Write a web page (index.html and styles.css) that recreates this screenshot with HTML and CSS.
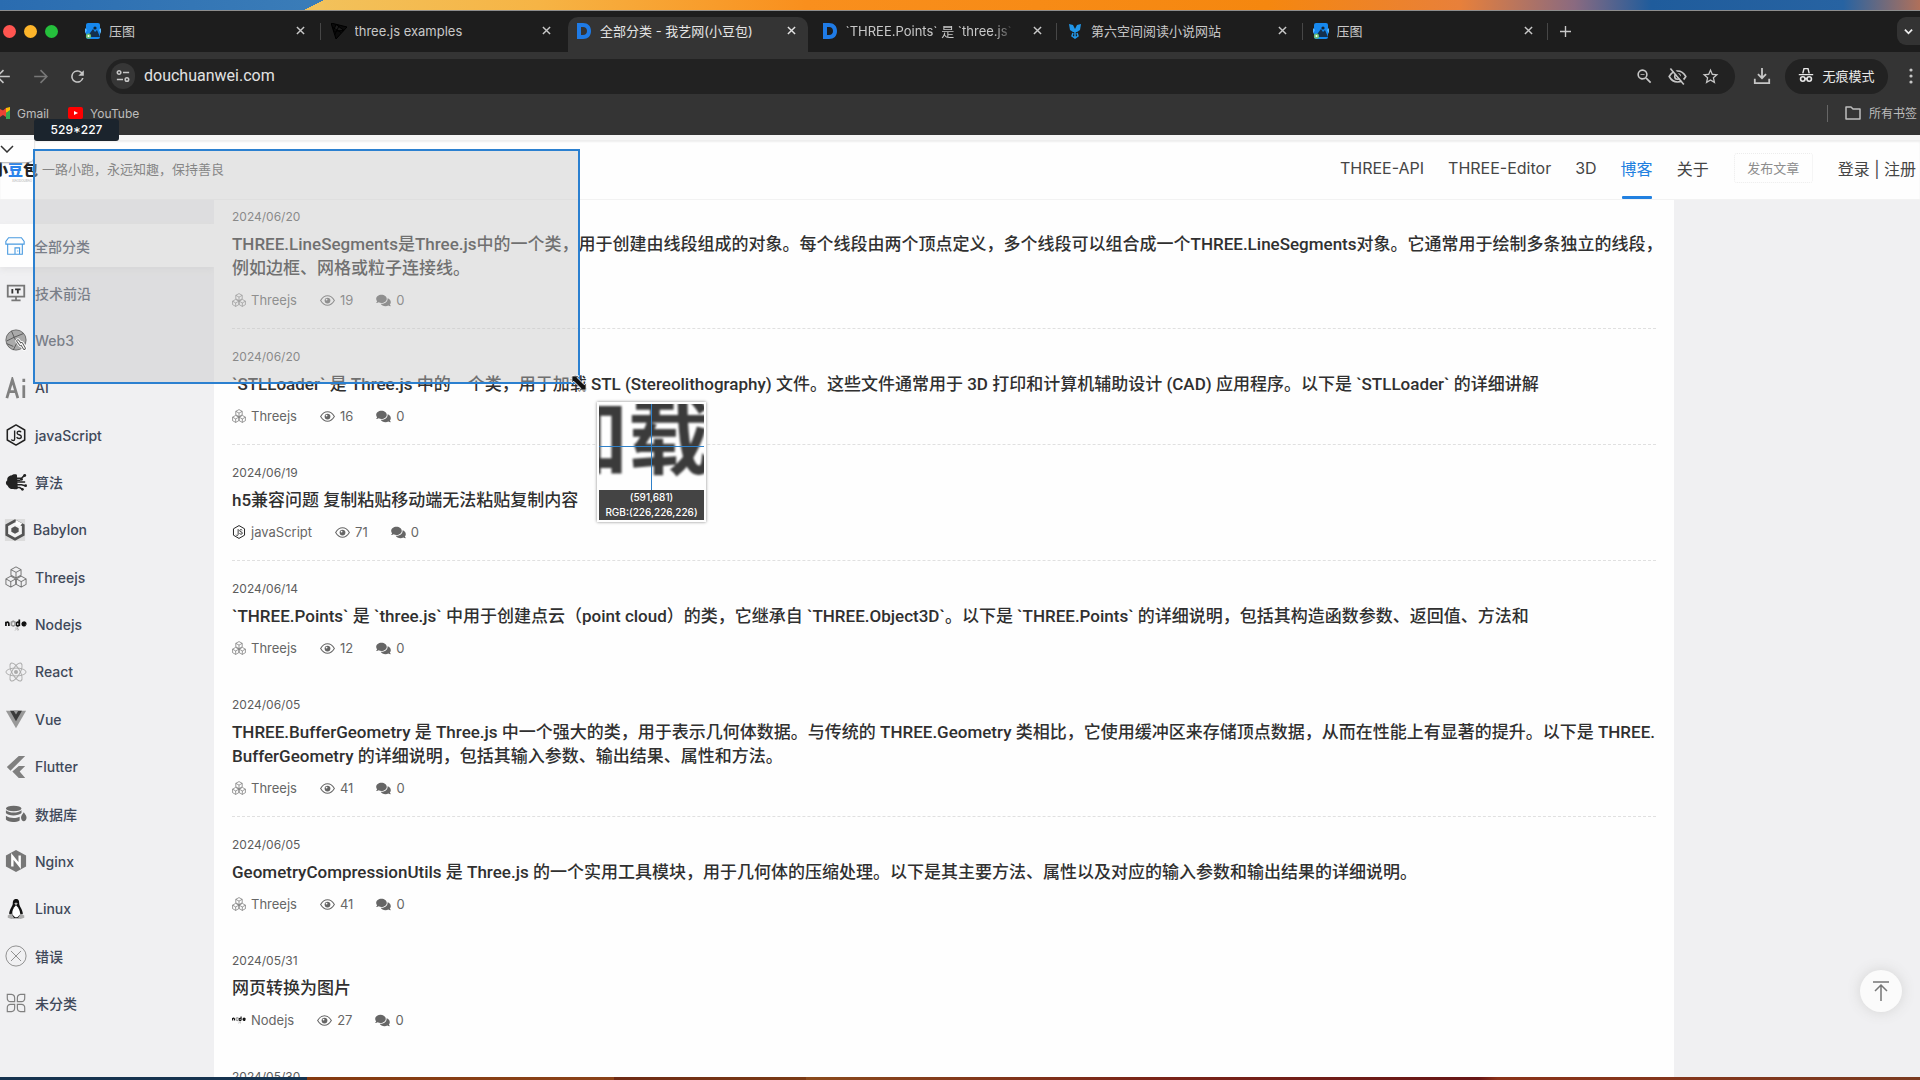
FILE: index.html
```html
<!DOCTYPE html>
<html lang="zh-CN">
<head>
<meta charset="utf-8">
<title>全部分类 - 我艺网(小豆包)</title>
<link rel="stylesheet" href="styles.css">
</head>
<body>
<svg class="defs" aria-hidden="true">
  <symbol id="close" viewBox="0 0 10 10"><path d="M1 1l8 8M9 1L1 9" fill="none" stroke="currentColor" stroke-width="1.6"/></symbol>
  <symbol id="pic" viewBox="0 0 16 16"><rect x="1" y="0" width="14" height="16" rx="2" fill="#1688ee"/><path d="M2 14l6-8 2 3 2-2 3 7z" fill="#14304f"/><circle cx="10" cy="5" r="1.6" fill="#123" /><path d="M0 5l2 2-2 4zM16 5l-2 2 2 4z" fill="#58b7ff"/><circle cx="3.500" cy="13" r="2.600" fill="#6cc070"/><circle cx="3.500" cy="13" r="1" fill="#fff"/></symbol>
  <symbol id="dmark" viewBox="0 0 16 16"><path fill-rule="evenodd" d="M1 0h6c5 0 8 3 8 8s-3 8-8 8H1zM5 4v8h2c2.500 0 4-1.500 4-4s-1.500-4-4-4z" fill="#1f7be6"/></symbol>
  <symbol id="cubes" viewBox="0 0 24 24"><g fill="none" stroke="currentColor" stroke-width="1.100" stroke-linejoin="round"><path d="M12 1l5.500 3v6L12 13l-5.500-3V4zM6.500 4l5.500 3 5.500-3M12 7v6M6.300 11l5.300 3v6l-5.300 3-5.300-3v-6zM1 14l5.300 3 5.300-3M6.300 17v6M17.700 11l5.300 3v6l-5.300 3-5.300-3v-6zM12.400 14l5.300 3 5.300-3M17.700 17v6"/></g></symbol>
  <symbol id="eye" viewBox="0 0 24 18"><path d="M1 9c3-5 7-7.500 11-7.500S20 4 23 9c-3 5-7 7.500-11 7.500S4 14 1 9z" fill="none" stroke="currentColor" stroke-width="1.700"/><circle cx="12" cy="9" r="4.600" fill="currentColor"/><circle cx="10.500" cy="7.500" r="1.400" fill="#fff"/></symbol>
  <symbol id="chat" viewBox="0 0 576 512"><path fill="currentColor" d="M416 192c0-88.400-93.100-160-208-160S0 103.600 0 192c0 34.300 14.100 65.900 38 92-13.400 30.200-35.500 54.200-35.800 54.500-2.200 2.300-2.800 5.700-1.500 8.700S4.800 352 8 352c36.600 0 66.900-12.300 88.700-25 32.200 15.700 70.300 25 111.300 25 114.900 0 208-71.600 208-160zm122 220c23.900-26 38-57.700 38-92 0-66.900-53.500-124.200-129.300-148.100.900 6.600 1.300 13.300 1.300 20.100 0 105.900-107.700 192-240 192-10.800 0-21.300-.800-31.700-1.900C207.800 439.600 281.800 480 368 480c41 0 79.100-9.200 111.300-25 21.800 12.700 52.100 25 88.700 25 3.200 0 6.100-1.900 7.300-4.800 1.300-2.900.700-6.300-1.500-8.700-.300-.300-22.400-24.200-35.800-54.500z"/></symbol>
  <symbol id="jshex" viewBox="0 0 24 24"><path d="M12 1l9.500 5.500v11L12 23l-9.500-5.500v-11z" fill="none" stroke="#222" stroke-width="1.700" stroke-linejoin="round"/><path d="M10.500 7v9.500c0 2-3 1.800-3.500.3M17.500 9c-.8-1.500-4.300-1.500-4.300.7 0 2.800 4.600 1.300 4.600 4.200 0 2.500-4.300 2.500-5 .3" fill="none" stroke="#222" stroke-width="1.500"/></symbol>
  <symbol id="nodelogo" viewBox="0 0 24 14"><g fill="none" stroke-width="1.900"><path d="M1 8V3.500M1 5c.8-1.600 3.200-1.600 3.200.5V8M15.600 1v7M15.600 5.500a1.700 2 0 1 0 0 1M18.800 5.800h3.800c0-2.600-3.600-2.600-3.800 0 .2 2.200 2.600 2.300 3.700 1.300" stroke="#111"/><path d="M7 4l2-1 2 1v3L9 8 7 7z" stroke="#999"/><path d="M12 9.500v2.500l-1 1M14.500 10h-1v1.300h1v1.300h-1" stroke="#999" stroke-width=".8"/></g></symbol>
</svg>

<div class="desktop">
  <div class="window">
    <div class="tabbar">
      <div class="lights"><i class="red"></i><i class="amber"></i><i class="green"></i></div>
      <div class="tabs">
        <div class="tab"><svg class="fav"><use href="#pic"/></svg><span class="name">压图</span><button class="x" aria-label="关闭"><svg><use href="#close"/></svg></button></div>
        <div class="tab plain"><svg class="fav" viewBox="0 0 16 16"><path d="M0 0l16 4L5 16zM5 1.500L2.500 8 13 7.500 5 1.500M8 3L3.500 12M10 9.500L1 4" fill="#0b0b0b" stroke="#000"/></svg><span class="name">three.js examples</span><button class="x" aria-label="关闭"><svg><use href="#close"/></svg></button></div>
        <div class="tab active"><svg class="fav"><use href="#dmark"/></svg><span class="name">全部分类 - 我艺网(小豆包)</span><button class="x" aria-label="关闭"><svg><use href="#close"/></svg></button></div>
        <div class="tab"><svg class="fav"><use href="#dmark"/></svg><span class="name fade">`THREE.Points` 是 `three.js`</span><button class="x" aria-label="关闭"><svg><use href="#close"/></svg></button></div>
        <div class="tab"><svg class="fav" viewBox="0 0 16 16"><path d="M2 1l4 1 2 4 2-4 4-1-1 6-3 2H6L3 7z" fill="#2196e8"/><path d="M8 8v7M6 10l-1 3 3 2 3-2-1-3" fill="none" stroke="#2196e8" stroke-width="1.500"/></svg><span class="name">第六空间阅读小说网站</span><button class="x" aria-label="关闭"><svg><use href="#close"/></svg></button></div>
        <div class="tab"><svg class="fav"><use href="#pic"/></svg><span class="name">压图</span><button class="x" aria-label="关闭"><svg><use href="#close"/></svg></button></div>
      </div>
      <button class="plus" aria-label="新标签页"><svg viewBox="0 0 12 12"><path d="M6 0v12M0 6h12" stroke="currentColor" stroke-width="1.500"/></svg></button>
      <button class="more" aria-label="搜索标签页"><svg viewBox="0 0 10 10"><path d="M1 3l4 4 4-4" fill="none" stroke="currentColor" stroke-width="2"/></svg></button>
    </div>

    <div class="toolbar">
      <div class="history">
        <button aria-label="后退"><svg viewBox="0 0 24 24"><path d="M20 12H4M12 4l-8 8 8 8" fill="none" stroke="currentColor" stroke-width="2"/></svg></button>
        <button aria-label="前进" class="dim"><svg viewBox="0 0 24 24"><path d="M4 12h16M12 4l8 8-8 8" fill="none" stroke="currentColor" stroke-width="2"/></svg></button>
        <button aria-label="刷新"><svg viewBox="0 0 24 24"><path fill="currentColor" d="M17.650 6.350A8 8 0 1 0 19.730 14h-2.080A6 6 0 1 1 12 6c1.660 0 3.140.69 4.220 1.780L13 11h7V4z"/></svg></button>
      </div>
      <div class="omnibox">
        <button class="site" aria-label="网站信息"><svg viewBox="0 0 16 16"><g fill="none" stroke="currentColor" stroke-width="1.800"><circle cx="3.500" cy="4" r="2"/><path d="M8 4h7M1 12h7"/><circle cx="12.500" cy="12" r="2"/></g></svg></button>
        <input type="text" aria-label="地址栏" value="douchuanwei.com">
        <button aria-label="缩放"><svg viewBox="0 0 24 24"><path fill="currentColor" d="M15.500 14h-.79l-.28-.27A6.500 6.500 0 1 0 13.730 14.430l.27.28v.79l5 5 1.500-1.500zm-6 0a4.500 4.500 0 1 1 0-9 4.500 4.500 0 0 1 0 9zM7 9h5v1H7z"/></svg></button>
        <button aria-label="第三方 Cookie"><svg viewBox="0 0 24 24"><path d="M1.500 12C4 7.500 8 5 12 5s8 2.500 10.500 7c-2.500 4.500-6.500 7-10.500 7S4 16.500 1.500 12z" fill="none" stroke="currentColor" stroke-width="2"/><circle cx="12" cy="12" r="3.500" fill="none" stroke="currentColor" stroke-width="2"/><path d="M5 1l17 20" stroke="#222" stroke-width="3"/><path d="M3 2l17 20" stroke="currentColor" stroke-width="2"/></svg></button>
        <button aria-label="收藏"><svg viewBox="0 0 24 24"><path fill="currentColor" d="M22 9.240l-7.190-.62L12 2 9.190 8.630 2 9.240l5.460 4.730L5.820 21 12 17.270 18.180 21l-1.630-7.030zM12 15.400l-3.760 2.270 1-4.280-3.320-2.880 4.380-.38L12 6.100l1.710 4.040 4.380.38-3.320 2.880 1 4.280z"/></svg></button>
      </div>
      <button class="dl" aria-label="下载"><svg viewBox="0 0 20 20"><path d="M10 1v11M5.500 8l4.500 4.500L14.500 8M2 13v5h16v-5" fill="none" stroke="currentColor" stroke-width="2"/></svg></button>
      <button class="incog"><svg viewBox="0 0 20 20"><path d="M6 8l1.500-6h5L14 8M1 9.500h18" fill="none" stroke="currentColor" stroke-width="1.800"/><g fill="none" stroke="currentColor" stroke-width="2"><circle cx="6" cy="15" r="2.800"/><circle cx="14" cy="15" r="2.800"/><path d="M8.500 14.500h3"/></g></svg>无痕模式</button>
      <button class="dots" aria-label="菜单"><svg viewBox="0 0 4 16"><g fill="currentColor"><circle cx="2" cy="2" r="1.600"/><circle cx="2" cy="8" r="1.600"/><circle cx="2" cy="14" r="1.600"/></g></svg></button>
    </div>

    <div class="bookmarks">
      <a href="#" class="gmail"><svg viewBox="0 0 10 12"><path d="M0 2v4l6 4V5z" fill="#ea4335"/><path d="M0 6l6-5v5l-6 4z" fill="#ea4335"/><path d="M6 1l4-1v4L6 6z" fill="#fbbc04"/><path d="M6 6l4-3v9H6z" fill="#34a853"/></svg>Gmail</a>
      <a href="#" class="yt"><svg viewBox="0 0 15 12"><rect width="15" height="12" rx="2" fill="#f00"/><path d="M6 4l4 2-4 2z" fill="#fff"/></svg>YouTube</a>
      <a href="#" class="all"><svg viewBox="0 0 16 14"><path d="M1 1h5l2 2h7v10H1z" fill="none" stroke="currentColor" stroke-width="1.500" stroke-linejoin="round"/></svg>所有书签</a>
    </div>

    <div class="page">
      <header class="head">
        <a href="#" class="logo"><span class="brush">小<b>豆</b>包</span><small>XIAODOUBAO</small></a>
        <p class="slogan">一路小跑，永远知趣，保持善良</p>
        <nav class="nav">
          <a href="#">THREE-API</a><a href="#">THREE-Editor</a><a href="#">3D</a><a href="#" class="on">博客</a><a href="#">关于</a>
        </nav>
        <button class="post">发布文章</button>
        <div class="login"><a href="#">登录</a> | <a href="#">注册</a></div>
      </header>

      <div class="body">
        <aside class="side">
          <ul>
            <li class="on"><a href="#"><svg viewBox="0 0 24 24"><g fill="none" stroke="#4a9be0" stroke-width="1.200"><path d="M5 3h14l3 4v3H2V7zM4 10v11h16V10M12 21v-7h5v7M15 17v1"/></g></svg>全部分类</a></li>
            <li><a href="#"><svg viewBox="0 0 24 24"><path d="M3 4h18v12H3z" fill="none" stroke="#777" stroke-width="2"/><path d="M8 7.500v5M11 8h6M14 8v4.500" stroke="#333" stroke-width="2"/><path d="M12 16v3M7 20h10" stroke="#777" stroke-width="2"/></svg>技术前沿</a></li>
            <li><a href="#"><svg viewBox="0 0 24 24"><circle cx="12" cy="12" r="11" fill="#aaa" stroke="#666"/><path d="M7 2l3 7-8 4M10 9l10-4M10 9l3 6-4 8M2 16l7 3" fill="none" stroke="#555"/><g fill="none" stroke-linecap="round"><path d="M14 13l3 4M18 16l3 5" stroke="#fff" stroke-width="5.500"/><path d="M14 13l3 4M18 16l3 5" stroke="#555" stroke-width="3.500"/><path d="M14 13l3 4M18 16l3 5" stroke="#fff" stroke-width="1.500"/></g></svg>Web3</a></li>
            <li><a href="#"><svg viewBox="0 0 24 24"><g fill="none" stroke="#808080" stroke-width="3"><path d="M2 23L8 3l6 20M4 16h8M20.500 9v14M20.500 2v3.500"/></g></svg>AI</a></li>
            <li><a href="#"><svg><use href="#jshex"/></svg>javaScript</a></li>
            <li><a href="#"><svg viewBox="0 0 24 24"><path d="M13 4c-3-1-5 0-6 1-3 0-5 3-4.500 5C0 12 1 15 3 16c1 3 4 4 6 3.500 2 1 4 .5 5-.5z" fill="#222"/><g fill="none" stroke="#222" stroke-width="1.700"><path d="M12 8h6l3-3M12 12h10M12 10h5M12 15h6l4 1M12 18h4l3 2"/></g><g fill="#222"><circle cx="21.500" cy="5" r="1.600"/><circle cx="18" cy="9" r="1.500"/><circle cx="22.500" cy="16" r="1.500"/><circle cx="19" cy="20" r="1.500"/></g></svg>算法</a></li>
            <li class="tight"><a href="#"><svg viewBox="0 0 24 24"><path d="M1 0h22v24H1z" fill="#dcdcdc"/><path d="M12 2l9 5v10l-9 5-9-5V7z" fill="#f4f4f4" stroke="#555" stroke-width="3"/><path d="M13 1l7 4-3 3-5-2z" fill="#fff"/><path d="M12 8l4 2v4l-4 2-4-2v-4z" fill="#555"/></svg>Babylon</a></li>
            <li><a href="#"><svg class="soft"><use href="#cubes"/></svg>Threejs</a></li>
            <li><a href="#"><svg><use href="#nodelogo"/></svg>Nodejs</a></li>
            <li><a href="#"><svg viewBox="0 0 24 24"><g fill="none" stroke="#aaa"><ellipse cx="12" cy="12" rx="11" ry="4.300"/><ellipse cx="12" cy="12" rx="11" ry="4.300" transform="rotate(60 12 12)"/><ellipse cx="12" cy="12" rx="11" ry="4.300" transform="rotate(120 12 12)"/></g><circle cx="12" cy="12" r="2.200" fill="#aaa"/></svg>React</a></li>
            <li><a href="#"><svg viewBox="0 0 24 24"><path d="M1 3h22L12 22z" fill="#999"/><path d="M5.500 3h13L12 14.500z" fill="#3a3a3a"/><path d="M9.500 3h5L12 7z" fill="#999"/></svg>Vue</a></li>
            <li><a href="#"><svg viewBox="0 0 24 24"><path d="M15 0h7L6 16l-4-4zM15 11h7l-6 6 6 7h-7l-7-7z" fill="#808080"/></svg>Flutter</a></li>
            <li><a href="#"><svg viewBox="0 0 24 24"><g fill="#6b6b6b"><ellipse cx="9.500" cy="6" rx="8.500" ry="3"/><path d="M1 8c4 3.300 13 3.300 17 0v3c-3 3.500-15 3.500-17 0zM1 14c4 3 11 3 15 1v4c-4 2.500-13 2.300-15-1z"/><path d="M20.500 10c2 3 3 4 3 6s-1.500 4-3 4-3-2-3-4 1-3 3-6z"/></g></svg>数据库</a></li>
            <li><a href="#"><svg viewBox="0 0 24 24"><path d="M12 0l11 6v12l-11 6-11-6V6z" fill="#777"/><path d="M8 18V7l8 10V6" fill="none" stroke="#fff" stroke-width="2.600"/></svg>Nginx</a></li>
            <li><a href="#"><svg viewBox="0 0 24 24"><path d="M12 1c-3 0-3.500 2.500-3.500 5S5 12 4.500 17l4 5h7l4-5c-.5-5-4-8-4-11S15 1 12 1z" fill="#111"/><path d="M12 8c-3 3-4.500 6-4 10l3 3h2.500l3-3c0-4-1.500-7-4.500-10z" fill="#fff"/><path d="M10 6l2-1 2 1-2 2z" fill="#bbb"/><path d="M3 19l4-2 3 5-3 1-4-1.500zM21 19l-4-2-3 5 3 1 4-1.500z" fill="#aaa"/></svg>Linux</a></li>
            <li><a href="#"><svg viewBox="0 0 24 24"><g fill="none" stroke="#888"><circle cx="12" cy="12" r="11"/><path d="M6.500 6.500l11 11M17.500 6.500l-11 11"/></g></svg>错误</a></li>
            <li><a href="#"><svg viewBox="0 0 24 24"><g fill="none" stroke="#808080" stroke-width="1.300"><path d="M2.500 2.500H7a4 4 0 0 1 3.500 4v4H6a3.500 3.500 0 0 1-3.500-4zM21.500 2.500H17a4 4 0 0 0-3.500 4v4H18a3.500 3.500 0 0 0 3.500-4zM2.500 21.500H7a4 4 0 0 0 3.500-4v-4H6a3.500 3.500 0 0 0-3.500 4zM21.500 21.500H17a4 4 0 0 1-3.500-4v-4H18a3.500 3.500 0 0 1 3.500 4z"/></g></svg>未分类</a></li>
          </ul>
        </aside>

        <main class="list">
          <article><time>2024/06/20</time><h2>THREE.LineSegments是Three.js中的一个类，用于创建由线段组成的对象。每个线段由两个顶点定义，多个线段可以组合成一个THREE.LineSegments对象。它通常用于绘制多条独立的线段，<br>例如边框、网格或粒子连接线。</h2><div class="meta"><span><svg class="cat"><use href="#cubes"/></svg>Threejs</span><span><svg class="see"><use href="#eye"/></svg>19</span><span><svg class="see"><use href="#chat"/></svg>0</span></div></article>
          <article><time>2024/06/20</time><h2>`STLLoader` 是 Three.js 中的一个类，用于加载 STL (Stereolithography) 文件。这些文件通常用于 3D 打印和计算机辅助设计 (CAD) 应用程序。以下是 `STLLoader` 的详细讲解</h2><div class="meta"><span><svg class="cat"><use href="#cubes"/></svg>Threejs</span><span><svg class="see"><use href="#eye"/></svg>16</span><span><svg class="see"><use href="#chat"/></svg>0</span></div></article>
          <article><time>2024/06/19</time><h2>h5兼容问题 复制粘贴移动端无法粘贴复制内容</h2><div class="meta"><span><svg class="cat"><use href="#jshex"/></svg>javaScript</span><span><svg class="see"><use href="#eye"/></svg>71</span><span><svg class="see"><use href="#chat"/></svg>0</span></div></article>
          <article class="bare"><time>2024/06/14</time><h2>`THREE.Points` 是 `three.js` 中用于创建点云（point cloud）的类，它继承自 `THREE.Object3D`。以下是 `THREE.Points` 的详细说明，包括其构造函数参数、返回值、方法和</h2><div class="meta"><span><svg class="cat"><use href="#cubes"/></svg>Threejs</span><span><svg class="see"><use href="#eye"/></svg>12</span><span><svg class="see"><use href="#chat"/></svg>0</span></div></article>
          <article><time>2024/06/05</time><h2>THREE.BufferGeometry 是 Three.js 中一个强大的类，用于表示几何体数据。与传统的 THREE.Geometry 类相比，它使用缓冲区来存储顶点数据，从而在性能上有显著的提升。以下是 THREE.<br>BufferGeometry 的详细说明，包括其输入参数、输出结果、属性和方法。</h2><div class="meta"><span><svg class="cat"><use href="#cubes"/></svg>Threejs</span><span><svg class="see"><use href="#eye"/></svg>41</span><span><svg class="see"><use href="#chat"/></svg>0</span></div></article>
          <article class="bare"><time>2024/06/05</time><h2>GeometryCompressionUtils 是 Three.js 的一个实用工具模块，用于几何体的压缩处理。以下是其主要方法、属性以及对应的输入参数和输出结果的详细说明。</h2><div class="meta"><span><svg class="cat"><use href="#cubes"/></svg>Threejs</span><span><svg class="see"><use href="#eye"/></svg>41</span><span><svg class="see"><use href="#chat"/></svg>0</span></div></article>
          <article class="bare"><time>2024/05/31</time><h2>网页转换为图片</h2><div class="meta"><span><svg class="cat"><use href="#nodelogo"/></svg>Nodejs</span><span><svg class="see"><use href="#eye"/></svg>27</span><span><svg class="see"><use href="#chat"/></svg>0</span></div></article>
          <article class="bare"><time>2024/05/30</time></article>
        </main>
      </div>
      <button class="top" aria-label="回到顶部"><svg viewBox="0 0 16 20"><path d="M0 1h16M8 4v16M2 10l6-6 6 6" fill="none" stroke="currentColor" stroke-width="1.500"/></svg></button>
    </div>
  </div>
</div>

<div class="corner"><svg viewBox="0 0 14 8"><path d="M1 1l6 6 6-6" fill="none" stroke="currentColor" stroke-width="1.500"/></svg></div>
<div class="selection"></div>
<div class="size">529*227</div>
<svg class="cursor" viewBox="0 0 18 18"><path d="M1 1h8L7 3l8 8 2-2v8H9l2-2-8-8-2 2z" fill="#111" stroke="#fff"/></svg>
<div class="loupe"><div class="lens"><span>加载</span></div><p>(591,681)<br>RGB:(226,226,226)</p></div>
</body>
</html>
```
FILE: styles.css
```css
* { box-sizing: border-box; margin: 0; padding: 0; }
body {
  height: 100vh;
  overflow: hidden;
  font-family: Inter, "Noto Sans CJK SC", sans-serif;
  color: #333;
}
a { color: inherit; text-decoration: none; }
button { border: 0; background: none; color: inherit; font: inherit; display: flex; align-items: center; justify-content: center; }
ul { list-style: none; }
svg { display: block; flex: none; }
.defs { position: absolute; width: 0; height: 0; }

.desktop {
  height: 100vh;
  padding: 10px 0 3px;
  background:
    linear-gradient(90deg, #16334f 0 16%, #84390f 16%, #8a4218 32%, #6e2a14 32%, #7a3a14 42%, #8a4a1c 42%, #7a2418 60%, #671616 77%, #8a3218 78%, #7a3a20 100%) bottom / 100% 3px no-repeat,
    linear-gradient(to bottom right, #3a7cb8 50%, #f2c25c 50%) 304px 0 / 20px 10px no-repeat,
    linear-gradient(90deg, #2a6cb0 0, #3a7cb8 16%, #f2c25c 16%, #f6b445 28%, #f98f1d 42%, #f5870f 66%, #e8803a 76%, #8a6a80 82%, #1f5c9c 86%, #2763a2 96%, #b0705a 100%);
}
.window { height: 100%; display: flex; flex-direction: column; overflow: hidden; border-top: 1px solid #8d8d8d; background: #fefefe; }

.tabbar { display: flex; flex: none; height: 41px; background: #1d1d1d; color: #c8c8c8; font-size: 13px; }
.lights { display: flex; align-items: center; gap: 8px; width: 75px; flex: none; padding-left: 3px; }
.lights i { width: 13px; height: 13px; border-radius: 50%; }
.red { background: #ff5550; }
.amber { background: #fdb52a; }
.green { background: #25c03c; }
.tabs { display: flex; width: 1473px; flex: 0 1 auto; }
.tab { display: flex; align-items: center; flex: 1 1 0; min-width: 0; gap: 8px; padding: 0 10px 2px; position: relative; }
.tab::after { content: ""; position: absolute; right: 0; top: 12px; width: 1px; height: 17px; background: #474747; }
.plain::after, .active::after { display: none; }
.active { background: #343434; border-radius: 10px 10px 0 0; margin: 6px 4px 0 2px; padding: 0 6px 8px 8px; color: #e4e4e4; }
.fav { width: 16px; height: 16px; }
.name { flex: 1; white-space: nowrap; overflow: hidden; }
.fade { -webkit-mask-image: linear-gradient(90deg, #000 85%, transparent 98%); mask-image: linear-gradient(90deg, #000 85%, transparent 98%); }
.x { width: 20px; height: 20px; }
.x svg { width: 9px; height: 9px; }
.plus { width: 34px; }
.plus svg { width: 11px; height: 11px; }
.more { margin: 6px 0 7px auto; width: 23px; background: #333; border-radius: 9px 0 0 9px; color: #eee; }
.more svg { width: 9px; height: 9px; }

.toolbar { display: flex; flex: none; align-items: center; height: 48px; background: #343434; color: #c6c6c6; }
.history { display: flex; width: 106px; gap: 18px; }
.history svg { width: 19px; height: 19px; }
.history button:first-child { margin-left: -6px; }
.dim { color: #777; }
.omnibox { flex: 1; display: flex; align-items: center; gap: 14px; height: 35px; background: #222; border-radius: 18px; padding: 0 15px 0 5px; }
.omnibox button { width: 19px; }
.omnibox svg { width: 19px; height: 19px; }
.omnibox .site { width: 24px; height: 26px; border-radius: 13px; background: #363636; margin-right: -5px; }
.omnibox .site svg { width: 14px; height: 14px; }
.omnibox input { flex: 1; min-width: 0; border: 0; outline: 0; background: none; color: #e2e2e2; font: 15px/20px Roboto, sans-serif; font-size: 16px; }
.dl { width: 50px; flex: none; padding-left: 4px; }
.dl svg { width: 18px; height: 18px; }
.incog { flex: none; gap: 8px; width: 103px; height: 35px; border-radius: 18px; background: #222; color: #e8e8e8; font-size: 13px; padding-bottom: 2px; }
.incog svg { width: 16px; height: 16px; }
.dots { width: 32px; padding-left: 13px; flex: none; }
.dots svg { width: 4px; height: 16px; }

.bookmarks { display: flex; flex: none; align-items: center; gap: 19px; height: 35px; padding-bottom: 9px; background: #343434; color: #bdbdbd; font-size: 12px; }
.bookmarks a { display: flex; align-items: center; gap: 7px; }
.gmail svg { width: 10px; height: 12px; }
.yt svg { width: 15px; height: 12px; }
.bookmarks .all { margin-left: auto; gap: 8px; border-left: 1px solid #666; padding: 0 3px 0 17px; line-height: 17px; }
.all svg { width: 16px; height: 14px; }

.page { flex: 1; min-height: 0; display: flex; flex-direction: column; position: relative; background: #fefefe; border-top: 5px solid #f6f6f6; box-shadow: inset 0 2px 2px #eee; }
.head { flex: none; display: flex; align-items: center; height: 60px; padding: 0 4px 4px 0; border-bottom: 1px solid #f2f2f2; font-size: 16px; color: #454545; }
.logo { width: 42px; flex: none; display: flex; flex-direction: column; align-items: flex-start; padding-top: 8px; }
.brush { font-size: 15px; line-height: 18px; font-weight: 900; color: #222; margin-left: -7px; white-space: nowrap; }
.brush b { color: #2b83ea; }
.logo small { font-size: 3px; line-height: 4px; color: #aaa; margin-left: 12px; }
.slogan { font-size: 13px; line-height: 20px; padding-top: 2px; color: #555; }
.nav { margin-left: auto; display: flex; gap: 24px; align-self: stretch; }
.nav a { display: flex; align-items: center; position: relative; }
.nav .on { color: #2180e0; }
.nav .on::after { content: ""; position: absolute; left: 1px; right: 1px; bottom: -4px; height: 3px; border-radius: 1px; background: #2180e0; }
.post { margin: 0 25px; width: 79px; height: 30px; border: 1px dotted #ececec; border-radius: 3px; font-size: 13px; color: #8d8d8d; }

.body { flex: 1; min-height: 0; display: grid; grid-template-columns: 214px minmax(0, 1fr) 246px; background: #f0f0f2; }
.side { display: flex; padding: 22px 0 50px; }
.side ul { flex: 1; display: flex; flex-direction: column; }
.side li { flex: 1; display: flex; padding: 2px 0; }
.side a { flex: 1; display: flex; align-items: center; gap: 8px; padding-left: 5px; font-size: 14px; font-weight: 500; color: #40495a; }
.side svg { width: 22px; height: 22px; }
.side .on a { background: #fefefe; padding-left: 4px; box-shadow: 0 3px 6px #e4e4e6; }
.side .tight a { padding-left: 4px; gap: 7px; }
.soft { color: #777; }

.list { background: #fefefe; padding: 0 18px; overflow: hidden; }
.list article { padding: 18px 0 18px; border-bottom: 1px dashed #e0e0e0; }
.list article:first-child { padding-top: 7px; }
.list .bare { border-color: transparent; }
.list time { display: block; font-size: 12px; line-height: 20px; color: #5c5c5c; }
.list h2 { margin: 5px 0 10px; font-family: Roboto, "Noto Sans CJK SC", sans-serif; font-size: 17px; line-height: 24px; font-weight: 500; color: #303030; white-space: nowrap; }
.meta { display: flex; gap: 23px; font-size: 13px; line-height: 20px; color: #666; }
.meta span { display: flex; align-items: center; gap: 5px; }
.cat { width: 14px; height: 14px; }
.see { width: 15px; height: 13px; }

.top { position: absolute; right: 18px; bottom: 65px; width: 42px; height: 42px; border-radius: 50%; background: #fbfbfb; color: #777; box-shadow: 0 0 14px #d4d4d4; }
.top svg { width: 16px; height: 20px; }

.corner { position: absolute; left: 0; top: 140px; width: 34px; height: 22px; padding: 5px 0 0; background: #fefefe; border-radius: 0 0 6px 0; box-shadow: 0 1px 2px #aaa; color: #333; }
.corner svg { width: 14px; height: 8px; }
.selection { position: absolute; left: 33px; top: 149px; width: 547px; height: 235px; border: 2px solid #2b80d0; background: rgba(198, 198, 198, 0.43); }
.size { position: absolute; left: 34px; top: 119px; width: 85px; height: 22px; border-radius: 3px; background: #1b242d; color: #fff; font-size: 12px; line-height: 22px; font-weight: 500; text-align: center; }
.cursor { position: absolute; left: 571px; top: 375px; width: 16px; height: 16px; }
.loupe { position: absolute; left: 597px; top: 402px; width: 109px; border: 2px solid #fefefe; background: #fefefe; box-shadow: 0 0 3px #888; }
.lens { position: relative; height: 86px; overflow: hidden; }
.lens span { position: absolute; left: -55px; top: -8px; font-size: 84px; line-height: 84px; font-weight: 700; white-space: nowrap; color: #3b3b3b; filter: blur(1px); }
.lens::before, .lens::after { content: ""; position: absolute; z-index: 1; background: #2f80c8; }
.lens::before { left: 52px; top: 0; width: 1px; height: 100%; }
.lens::after { left: 0; top: 42px; width: 100%; height: 1px; }
.loupe p { background: #444; color: #fff; font-size: 10px; line-height: 15px; font-weight: 500; text-align: center; white-space: nowrap; }
```
